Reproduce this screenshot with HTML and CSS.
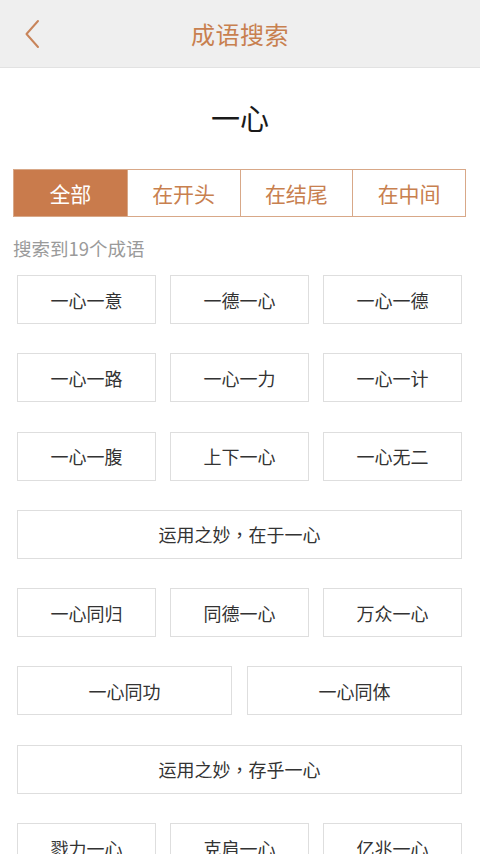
FILE: index.html
```html
<!DOCTYPE html>
<html lang="zh-CN">
<head>
<meta charset="utf-8">
<title>成语搜索</title>
<link rel="stylesheet" href="styles.css">
</head>
<body>
<header class="topbar">
  <span class="back">
    <svg width="18" height="30" viewBox="0 0 18 30"><path d="M15 2 L3.5 15 L15 28" fill="none" stroke="#c8845a" stroke-width="2" stroke-linecap="round" stroke-linejoin="round"/></svg>
  </span>
  <h1 class="title">成语搜索</h1>
</header>
<main class="content">
  <div class="word">一心</div>
  <div class="tabs">
    <div class="tab active">全部</div>
    <div class="tab">在开头</div>
    <div class="tab">在结尾</div>
    <div class="tab">在中间</div>
  </div>
  <div class="count">搜索到19个成语</div>
  <div class="list">
    <div class="row three">
      <div class="item">一心一意</div>
      <div class="item">一德一心</div>
      <div class="item">一心一德</div>
    </div>
    <div class="row three">
      <div class="item">一心一路</div>
      <div class="item">一心一力</div>
      <div class="item">一心一计</div>
    </div>
    <div class="row three">
      <div class="item">一心一腹</div>
      <div class="item">上下一心</div>
      <div class="item">一心无二</div>
    </div>
    <div class="row one">
      <div class="item">运用之妙<span class="punct">，</span>在于一心</div>
    </div>
    <div class="row three">
      <div class="item">一心同归</div>
      <div class="item">同德一心</div>
      <div class="item">万众一心</div>
    </div>
    <div class="row two">
      <div class="item">一心同功</div>
      <div class="item">一心同体</div>
    </div>
    <div class="row one">
      <div class="item">运用之妙<span class="punct">，</span>存乎一心</div>
    </div>
    <div class="row three">
      <div class="item">戮力一心</div>
      <div class="item">克肩一心</div>
      <div class="item">亿兆一心</div>
    </div>
  </div>
</main>
</body>
</html>
```
FILE: styles.css
```css
* { box-sizing: border-box; }
html, body { margin: 0; padding: 0; }
body {
  width: 480px;
  height: 854px;
  overflow: hidden;
  background: #ffffff;
  font-family: "Noto Sans CJK SC", "Noto Sans", sans-serif;
}
.topbar {
  height: 68px;
  background: #efefef;
  border-bottom: 1px solid #e2e2e2;
  display: flex;
  align-items: center;
  justify-content: center;
  position: relative;
}
.back {
  position: absolute;
  left: 23px;
  top: 19px;
  width: 18px;
  height: 30px;
  display: block;
}
.back svg { display: block; }
.title {
  margin: 0;
  font-size: 24px;
  font-weight: normal;
  color: #c8804f;
  letter-spacing: 0.5px;
  line-height: 1;
}
.content { padding: 0; }
.word {
  height: 101px;
  display: flex;
  align-items: center;
  justify-content: center;
  font-size: 29px;
  color: #1a1a1a;
  padding-bottom: 3px;
}
.tabs {
  margin: 0 14px 0 13px;
  height: 48px;
  display: grid;
  grid-template-columns: repeat(4, 1fr);
  border: 1px solid #d8a888;
}
.tab {
  display: flex;
  align-items: center;
  justify-content: center;
  font-size: 21px;
  color: #c8804f;
  border-left: 1px solid #d8a888;
}
.tab:first-child { border-left: none; }
.tab.active {
  background: #c97b4c;
  color: #ffffff;
}
.count {
  margin: 0 0 0 13px;
  height: 58px;
  display: flex;
  align-items: center;
  font-size: 18.5px;
  color: #9a9a9a;
  padding-top: 4px;
}
.list {
  padding: 0 18px 0 17px;
  display: flex;
  flex-direction: column;
  gap: 29.3px;
}
.row {
  display: grid;
  gap: 14px;
}
.row.three { grid-template-columns: repeat(3, 1fr); }
.row.two { grid-template-columns: repeat(2, 1fr); gap: 15px; }
.row.one { grid-template-columns: 1fr; }
.item {
  height: 49px;
  border: 1.5px solid #dedede;
  display: flex;
  align-items: center;
  justify-content: center;
  font-size: 18px;
  color: #333333;
}
.punct {
  font-family: "Noto Sans CJK TC", "Noto Sans CJK SC", sans-serif;
}
```
